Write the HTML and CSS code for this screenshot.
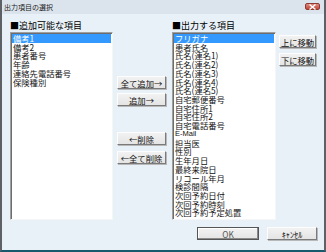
FILE: index.html
```
<!DOCTYPE html>
<html lang="ja">
<head>
    <meta charset="UTF-8">
    <title>出力項目の選択</title>
    <link rel="stylesheet" href="styles.css">
</head>
<body>
<div class="window">
    <div class="titlebar">
        <span class="title">出力項目の選択</span>
        <span class="close">
            <svg width="9" height="6" viewBox="0 0 9 6"><path d="M1.5 0.5 L7.5 5.5 M7.5 0.5 L1.5 5.5" stroke="#fff" stroke-width="1.4"/></svg>
        </span>
    </div>

    <div class="main">
        <!-- 追加可能な項目 -->
        <div class="col col-left">
            <div class="label">■追加可能な項目</div>
            <div class="listbox">
                <div class="item selected">備考1</div>
                <div class="item">備考2</div>
                <div class="item">患者番号</div>
                <div class="item">年齢</div>
                <div class="item">連絡先電話番号</div>
                <div class="item">保険種別</div>
            </div>
        </div>

        <div class="mid-buttons">
            <button class="btn btn-all-add">全て追加→</button>
            <button class="btn btn-add">追加→</button>
            <button class="btn btn-del">←削除</button>
            <button class="btn btn-all-del">←全て削除</button>
        </div>

        <!-- 出力する項目 -->
        <div class="col col-right">
            <div class="label">■出力する項目</div>
            <div class="listbox">
                <div class="item selected">フリガナ</div>
                <div class="item">患者氏名</div>
                <div class="item">氏名(連名1)</div>
                <div class="item">氏名(連名2)</div>
                <div class="item">氏名(連名3)</div>
                <div class="item">氏名(連名4)</div>
                <div class="item">氏名(連名5)</div>
                <div class="item">自宅郵便番号</div>
                <div class="item">自宅住所1</div>
                <div class="item">自宅住所2</div>
                <div class="item">自宅電話番号</div>
                <div class="item latin">E-Mail</div>
                <div class="item">担当医</div>
                <div class="item">性別</div>
                <div class="item">生年月日</div>
                <div class="item">最終来院日</div>
                <div class="item">リコール年月</div>
                <div class="item">検診間隔</div>
                <div class="item">次回予約日付</div>
                <div class="item">次回予約時刻</div>
                <div class="item">次回予約予定処置</div>
            </div>
        </div>

        <div class="side-buttons">
            <button class="btn btn-up">上に移動</button>
            <button class="btn btn-down">下に移動</button>
        </div>
    </div>

    <div class="footer">
        <button class="btn btn-ok">OK</button>
        <button class="btn btn-cancel">ｷｬﾝｾﾙ</button>
    </div>
</div>
</body>
</html>
```

FILE: styles.css
```
body {
    margin: 0;
    font-family: "Noto Sans CJK JP", "DejaVu Sans", sans-serif;
    color: #000;
}
.window {
    width: 326px;
    height: 252px;
    box-sizing: border-box;
    background-color: #e9f1f8;
    border-left: 2px solid #5d6166;
    border-right: 2px solid #5d6166;
    border-bottom: 2px solid #17596c;
}
.titlebar {
    height: 14px;
    display: flex;
    justify-content: space-between;
    align-items: flex-start;
    background-color: #dbe4ec;
}
.title {
    font-size: 7px;
    line-height: 8px;
    margin: 3px 0 0 2px;
    color: #222;
}
.close {
    width: 15px;
    height: 7px;
    margin: 3px 4px 0 0;
    background: linear-gradient(#e08b7f, #c2473a);
    border: 1px solid #8d3b33;
    border-radius: 2px;
    box-sizing: border-box;
    display: flex;
    justify-content: center;
    align-items: center;
}
.close svg {
    display: block;
}
.main {
    display: flex;
    padding: 4px 0 0 8px;
}
.col {
    display: flex;
    flex-direction: column;
}
.col-left {
    width: 103px;
}
.col-right {
    width: 104px;
    margin-left: 5px;
}
.label {
    height: 14px;
    font-size: 9px;
    line-height: 10px;
    padding-top: 3px;
    box-sizing: border-box;
}
.listbox {
    height: 188px;
    box-sizing: border-box;
    background-color: #fff;
    border-top: 1px solid #a0a0a0;
    border-left: 1px solid #a0a0a0;
    border-bottom: 1px solid #f6f6f6;
    border-right: 1px solid #f6f6f6;
    box-shadow: inset 1px 1px 0 #6d6d6d;
    padding: 1px 1px 0 1px;
}
.item {
    height: 8.73px;
    font-size: 8.3px;
    line-height: 8.73px;
    padding-left: 1px;
    white-space: nowrap;
    color: #111;
}
.item.latin {
    font-family: "Liberation Sans", sans-serif;
    font-size: 7.5px;
}
.item.selected {
    background-color: #3399ff;
    color: #fff;
}
.btn {
    display: block;
    height: 13px;
    padding: 0;
    box-sizing: border-box;
    font-family: "Noto Sans CJK JP", sans-serif;
    font-size: 8.3px;
    line-height: 10px;
    color: #111;
    background: linear-gradient(#f2f2f2, #e4e4e4);
    border: 1px solid;
    border-color: #fdfdfd #7a7a7a #7a7a7a #fdfdfd;
    box-shadow: 1px 1px 0 #b8b8b8;
}
.mid-buttons {
    width: 50px;
    margin-left: 4px;
    padding-top: 58px;
}
.mid-buttons .btn {
    width: 49px;
}
.btn-add {
    margin-top: 4px;
}
.btn-del {
    margin-top: 26px;
}
.btn-all-del {
    margin-top: 6px;
}
.side-buttons {
    margin-left: 3px;
    padding-top: 17px;
}
.side-buttons .btn {
    width: 37px;
}
.btn-down {
    margin-top: 5px;
}
.footer {
    display: flex;
    justify-content: flex-end;
    gap: 8px;
    padding: 7px 7px 0 0;
}
.btn-ok {
    width: 62px;
    color: #555;
    border-color: #555;
    box-shadow: inset -1px -1px 0 #8a8a8a, inset 1px 1px 0 #fff;
}
.btn-cancel {
    width: 50px;
}
```
